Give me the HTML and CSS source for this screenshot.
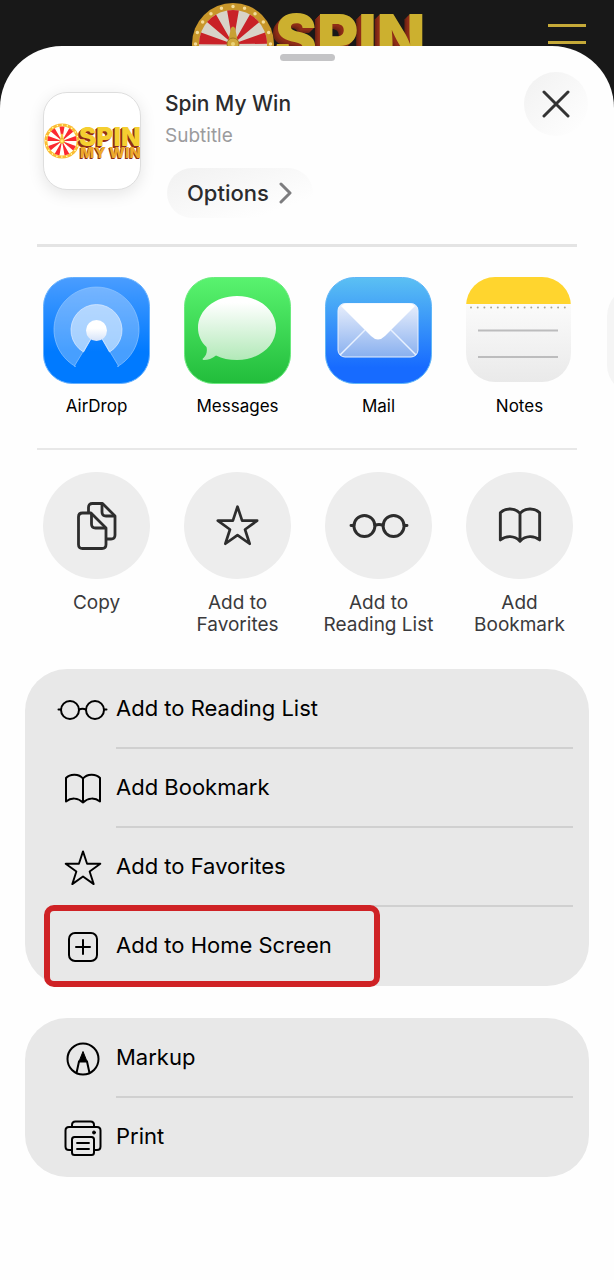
FILE: index.html
```html
<!DOCTYPE html>
<html lang="en">
<head>
    <meta charset="UTF-8">
    <meta name="viewport" content="width=device-width, initial-scale=1.0">
    <title>Spin My Win</title>
    <link rel="stylesheet" href="styles.css">
</head>
<body>

    <!-- Shared icons -->
    <svg class="defs" width="0" height="0" aria-hidden="true">
        <symbol id="wheel" viewBox="0 0 84 84">
            <circle cx="42" cy="42" r="41" fill="#c8962a"/>
            <circle cx="42" cy="42" r="37.500" fill="none" stroke="#f3dc9a" stroke-width="3.500" stroke-linecap="round" pathLength="20" stroke-dasharray="0 1"/>
            <circle cx="42" cy="42" r="34" fill="#d8d3c8"/>
            <circle cx="42" cy="42" r="17" fill="none" stroke="#c92127" stroke-width="34" pathLength="18" stroke-dasharray="1 1" transform="rotate(-100 42 42)"/>
            <path d="M40 26q2-3 4 0l3 14v6H37v-6z" fill="#c8a034"/>
            <circle cx="42" cy="42" r="6" fill="#d0a83a" stroke="#9c7a22"/>
            <circle cx="42" cy="42" r="2" fill="#e9d278"/>
        </symbol>
        <symbol id="glasses" viewBox="0 0 51 24">
            <g fill="none" stroke="currentColor">
                <circle cx="13" cy="12" r="9"/>
                <circle cx="38" cy="12" r="9"/>
                <path d="M22 11.500q3.500-1.500 7 0M1.500 11.500H4M47 11.500h2.500" stroke-linecap="round"/>
            </g>
        </symbol>
        <symbol id="book" viewBox="0 0 38 32">
            <path d="M19 29.500V5.500C15 .5 6 .5 2 5v23.500c5-4 12-4 17 1 5-5 12-5 17-1V5C32 .5 23 .5 19 5.500" fill="none" stroke="currentColor" stroke-linejoin="round" stroke-linecap="round"/>
        </symbol>
        <symbol id="star" viewBox="0 0 40 38">
            <path d="M20 1.500l4.300 13h14L27 22.700l4.300 13.300L20 28 8.700 36 13 22.700 1.700 14.500h14z" fill="none" stroke="currentColor" stroke-linejoin="round"/>
        </symbol>
    </svg>

    <header class="topbar">
        <svg class="brand" viewBox="0 0 232 46" role="img" aria-label="Spin My Win">
            <use href="#wheel" x="0" y="2" width="84" height="84"/>
            <text class="brand-text" x="84" y="60">SPIN</text>
        </svg>
        <button class="menu" aria-label="Menu"><span></span><span></span></button>
    </header>

    <main class="sheet">
        <div class="grabber"></div>

        <section class="page-info">
            <div class="page-icon">
                <svg viewBox="0 0 96 96" role="img" aria-label="Spin My Win">
                    <use class="bright" href="#wheel" x="0" y="30" width="36" height="36"/>
                    <text class="mini-text" x="35" y="53">SPIN</text>
                    <text class="mini-text small" x="36" y="65">MY WIN</text>
                </svg>
            </div>
            <div class="page-text">
                <h1>Spin My Win</h1>
                <p>Subtitle</p>
                <button class="options">
                    Options
                    <svg width="14" height="22" viewBox="0 0 14 22"><path d="M2 2l9 9-9 9" fill="none" stroke="#7d7d7f" stroke-width="3" stroke-linecap="round" stroke-linejoin="round"/></svg>
                </button>
            </div>
            <button class="close" aria-label="Close">
                <svg width="28" height="28" viewBox="0 0 28 28"><path d="M2 2l24 24M26 2L2 26" stroke="#333" stroke-width="3" stroke-linecap="round"/></svg>
            </button>
        </section>

        <hr class="line thick">

        <section class="apps">
            <button class="app">
                <svg viewBox="0 0 107 107">
                    <defs>
                        <linearGradient id="air" x2="0" y2="1"><stop offset="0" stop-color="#4a9dff"/><stop offset=".7" stop-color="#007aff"/></linearGradient>
                        <linearGradient id="airDot" x2="0" y2="1"><stop offset=".4" stop-color="#fff"/><stop offset="1" stop-color="#d5e3fa"/></linearGradient>
                    </defs>
                    <rect x=".5" y=".5" width="106" height="106" rx="29" fill="url(#air)" stroke="#64b0ff"/>
                    <path d="M32.500 89.500A42.500 42.500 0 1 1 74.500 89.500Q76 90 75 88L58 60H49L32 88Q31 90 32.500 89.500z" fill="#fff" fill-opacity=".28" stroke="#8fc5ff" stroke-opacity=".7"/>
                    <path d="M40.500 75A25.500 25.500 0 1 1 66.500 75L58 60H49z" fill="#fff" fill-opacity=".5" stroke="#d6e7ff" stroke-opacity=".8"/>
                    <circle cx="53.500" cy="53.500" r="10.500" fill="url(#airDot)"/>
                </svg>
                <span>AirDrop</span>
            </button>
            <button class="app">
                <svg viewBox="0 0 107 107">
                    <defs>
                        <linearGradient id="msg" x2="0" y2="1"><stop offset="0" stop-color="#59f36f"/><stop offset="1" stop-color="#22bd3b"/></linearGradient>
                        <linearGradient id="bubble" x2="0" y2="1"><stop offset=".1" stop-color="#fff"/><stop offset="1" stop-color="#b2e9b8"/></linearGradient>
                    </defs>
                    <rect x=".5" y=".5" width="106" height="106" rx="29" fill="url(#msg)" stroke="#6bea7e"/>
                    <path d="M53 19c22 0 39 14 39 32S75 83 53 83c-8 0-15-1.500-21-4.500-4 3-8 4.500-12 4.500-1.500 0-2-1-.5-2 3-2.500 4-7 3-11-5.500-5-8.500-12-8.500-19 0-18 17-32 39-32z" fill="url(#bubble)"/>
                </svg>
                <span>Messages</span>
            </button>
            <button class="app">
                <svg viewBox="0 0 107 107">
                    <defs>
                        <linearGradient id="mail" x2="0" y2="1"><stop offset="0" stop-color="#5bc0f3"/><stop offset=".85" stop-color="#176bff"/></linearGradient>
                        <linearGradient id="env" x2="0" y2="1"><stop offset="0" stop-color="#e9effc"/><stop offset="1" stop-color="#89b0ef"/></linearGradient>
                    </defs>
                    <rect x=".5" y=".5" width="106" height="106" rx="29" fill="url(#mail)" stroke="#5fb6f8"/>
                    <rect x="13" y="26.500" width="80" height="53.500" rx="7" fill="url(#env)" stroke="#e6f1ff"/>
                    <path d="M15 78l25-25M91 78L66 53" stroke="#e8f1ff" stroke-width="1.500"/>
                    <path d="M16 29q2-2.500 6-2.500h62q4 0 6 2.500L60 59q-7 7-14 0z" fill="#fff"/>
                </svg>
                <span>Mail</span>
            </button>
            <button class="app">
                <svg viewBox="0 0 107 107">
                    <defs>
                        <linearGradient id="note" x2="0" y2="1"><stop offset=".2" stop-color="#fcfcfc"/><stop offset="1" stop-color="#e9e9e9"/></linearGradient>
                        <clipPath id="noteShape"><rect x="0" y="0" width="105" height="105" rx="29"/></clipPath>
                    </defs>
                    <g clip-path="url(#noteShape)">
                        <rect width="107" height="107" fill="url(#note)"/>
                        <rect width="107" height="27" fill="#ffd52e"/>
                    </g>
                    <path d="M5 30.500h96" stroke="#a9a695" stroke-width="2" stroke-linecap="round" stroke-dasharray="0 6.700"/>
                    <path d="M12 53.500h80M12 80h80" stroke="#bcbcbd" stroke-width="2"/>
                </svg>
                <span>Notes</span>
            </button>
            <button class="app" aria-label="More apps">
                <svg viewBox="0 0 107 107"><rect width="107" height="107" rx="29" fill="#f5f5f5"/></svg>
            </button>
        </section>

        <hr class="line">

        <section class="actions">
            <button class="action">
                <span class="circle">
                    <svg width="40" height="48" viewBox="0 0 40 48" fill="none" stroke="currentColor" stroke-width="2.800" stroke-linejoin="round">
                        <path d="M11.500 11V5.500q0-4 4-4h10L38 14v19q0 4-4 4h-4"/>
                        <path d="M25 2V10q0 4 4 4h9"/>
                        <path d="M5.500 11H14l15 15v16.500q0 4-4 4H5.500q-4 0-4-4V15q0-4 4-4z"/>
                        <path d="M14.500 11.500V22q0 4 4 4H29"/>
                    </svg>
                </span>
                Copy
            </button>
            <button class="action">
                <span class="circle"><svg class="bold" width="43" height="41"><use href="#star"/></svg></span>
                Add to<br>Favorites
            </button>
            <button class="action">
                <span class="circle"><svg class="bold" width="60" height="28"><use href="#glasses"/></svg></span>
                Add to<br>Reading&nbsp;List
            </button>
            <button class="action">
                <span class="circle"><svg class="bold" width="44" height="37"><use href="#book"/></svg></span>
                Add<br>Bookmark
            </button>
        </section>

        <section class="group">
            <button class="row">
                <span class="row-icon"><svg width="51" height="24"><use href="#glasses"/></svg></span>
                <span class="row-label">Add to Reading List</span>
            </button>
            <button class="row">
                <span class="row-icon"><svg width="38" height="32"><use href="#book"/></svg></span>
                <span class="row-label">Add Bookmark</span>
            </button>
            <button class="row">
                <span class="row-icon"><svg width="38" height="36"><use href="#star"/></svg></span>
                <span class="row-label">Add to Favorites</span>
            </button>
            <button class="row highlighted">
                <span class="row-icon">
                    <svg width="32" height="32" viewBox="0 0 32 32" fill="none" stroke="currentColor" stroke-linecap="round">
                        <rect x="2" y="2" width="28" height="28" rx="6"/>
                        <path d="M16 9v14M9 16h14"/>
                    </svg>
                </span>
                <span class="row-label">Add to Home Screen</span>
            </button>
        </section>

        <section class="group">
            <button class="row">
                <span class="row-icon">
                    <svg width="34" height="34" viewBox="0 0 34 34" fill="none" stroke="currentColor">
                        <circle cx="17" cy="17" r="15.500"/>
                        <path d="M10.500 31l2.500-11.500h8L23.500 31"/>
                        <path d="M17 9.500l4 10h-8z" fill="currentColor" stroke-width="1" stroke-linejoin="round"/>
                    </svg>
                </span>
                <span class="row-label">Markup</span>
            </button>
            <button class="row">
                <span class="row-icon">
                    <svg width="38" height="36" viewBox="0 0 38 36" fill="none" stroke="currentColor" stroke-linejoin="round" stroke-linecap="round">
                        <path d="M8 7V5q0-3.500 3.500-3.500h15Q30 1.500 30 5v2"/>
                        <path d="M8 30H5q-3.500 0-3.500-3.500v-16Q1.500 7 5 7h28q3.500 0 3.500 3.500v16Q36.500 30 33 30h-3"/>
                        <rect x="8" y="17" width="22" height="18" rx="2.500"/>
                        <path d="M13 23h12M13 29h12" stroke-width="1.800"/>
                        <circle cx="30" cy="12.500" r="1.500" fill="currentColor" stroke-width="1"/>
                    </svg>
                </span>
                <span class="row-label">Print</span>
            </button>
        </section>
    </main>

</body>
</html>
```
FILE: styles.css
```css
*,
*::after {
    box-sizing: border-box;
}

body {
    margin: 0;
    background-color: #181818;
    font-family: Inter, "Liberation Sans", sans-serif;
    color: #2b2b2d;
    min-height: 100vh;
    display: flex;
    flex-direction: column;
}

button {
    margin: 0;
    padding: 0;
    border: none;
    background: none;
    font-family: inherit;
    color: inherit;
    cursor: pointer;
}

svg {
    display: block;
}

.defs {
    position: absolute;
}

/* Site header behind the sheet */
.topbar {
    height: 46px;
    padding: 0 28px;
    display: grid;
    grid-template-columns: 1fr auto 1fr;
    overflow: hidden;
}

.brand {
    grid-column: 2;
    width: 232px;
    height: 46px;
}

.brand-text {
    font-size: 63px;
    font-weight: 900;
    fill: #ccb02f;
    text-shadow: -1px 1px #8f2d17, -2px 2px #8f2d17, -3px 3px #842a16, -4px 4px #782614, -5px 5px #6c2213;
}

.menu {
    justify-self: end;
    align-self: start;
    margin-top: 24px;
    display: grid;
    gap: 14px;
}

.menu span {
    width: 38px;
    height: 3px;
    background-color: #c5a938;
}

/* Share sheet */
.sheet {
    flex: 1;
    background-color: #fefefe;
    border-radius: 62px 62px 0 0;
    padding: 8px 0 40px;
    overflow: hidden;
}

.grabber {
    width: 55px;
    height: 7px;
    margin: 0 auto;
    border-radius: 4px;
    background-color: #c4c4c6;
}

.page-info {
    display: flex;
    align-items: flex-start;
    padding: 11px 26px 0 43px;
}

.page-icon {
    width: 98px;
    height: 98px;
    margin-top: 20px;
    border: 1px solid #dedede;
    border-radius: 24px;
    background-color: #fff;
    box-shadow: 0 4px 16px rgba(0, 0, 0, 0.1);
    overflow: hidden;
}

.bright {
    filter: brightness(1.25);
}

.mini-text {
    font-size: 26px;
    font-weight: 900;
    fill: #f5cf30;
    text-shadow: -1px 1px #8f2d17, -2px 2px #8f2d17;
}

.mini-text.small {
    font-size: 15px;
    fill: #eda92b;
    text-shadow: -1px 1px #8f2d17;
}

.page-text {
    flex: 1;
    margin: 18px 0 0 24px;
}

h1 {
    margin: 0;
    font-size: 21px;
    font-weight: 500;
    line-height: 28px;
}

.page-text p {
    margin: 3px 0 17px;
    font-size: 19px;
    line-height: 30px;
    color: #9b9b9d;
}

.options {
    display: flex;
    align-items: center;
    gap: 10px;
    height: 50px;
    padding: 0 20px;
    margin-left: 2px;
    border-radius: 25px;
    background: linear-gradient(160deg, #f1f1f1, #fefefe 80%);
    font-size: 22px;
    font-weight: 500;
}

.close {
    display: grid;
    place-items: center;
    width: 64px;
    height: 64px;
    border-radius: 50%;
    background: linear-gradient(135deg, #f1f1f1, #fefefe 90%);
}

.line {
    height: 2px;
    margin: 0 37px;
    border: none;
    background-color: #e8e8e8;
}

.line.thick {
    height: 3px;
    margin-top: 26px;
    background-color: #e4e4e4;
}

.apps,
.actions {
    display: flex;
    gap: 34px;
    padding: 30px 0 32px 43px;
    overflow: hidden;
}

.app,
.action {
    flex: none;
    width: 107px;
}

.app {
    font-size: 17px;
    line-height: 20px;
    color: #000;
}

.app svg {
    width: 107px;
    height: 107px;
    margin-bottom: 12px;
}

.actions {
    padding: 22px 0 33px 43px;
}

.action {
    display: flex;
    flex-direction: column;
    align-items: center;
    font-size: 19px;
    line-height: 22px;
    color: #3a3a3c;
}

.circle {
    display: grid;
    place-items: center;
    width: 107px;
    height: 107px;
    margin-bottom: 13px;
    border-radius: 50%;
    background-color: #ededed;
    color: #2d2d2d;
}

.bold {
    stroke-width: 2.5px;
}

/* Lists */
.group {
    margin: 0 25px 32px;
    padding-top: 1px;
    border-radius: 42px;
    background-color: #e8e8e8;
}

.row {
    position: relative;
    display: flex;
    align-items: center;
    gap: 8px;
    width: 100%;
    height: 79px;
    padding: 0 16px 0 32px;
    font-size: 22px;
    text-align: left;
    color: #000;
}

.row-icon {
    display: grid;
    place-items: center;
    width: 51px;
    stroke-width: 2px;
}

.row-label {
    flex: 1;
    line-height: 77px;
    border-bottom: 2px solid #d0d0d0;
}

.row:last-child .row-label {
    border-color: transparent;
}

/* Frame around the step to tap */
.highlighted::after {
    content: "";
    position: absolute;
    top: -2px;
    bottom: -1px;
    left: 19px;
    width: 336px;
    border: 6px solid #cf2225;
    border-radius: 10px;
}
```
